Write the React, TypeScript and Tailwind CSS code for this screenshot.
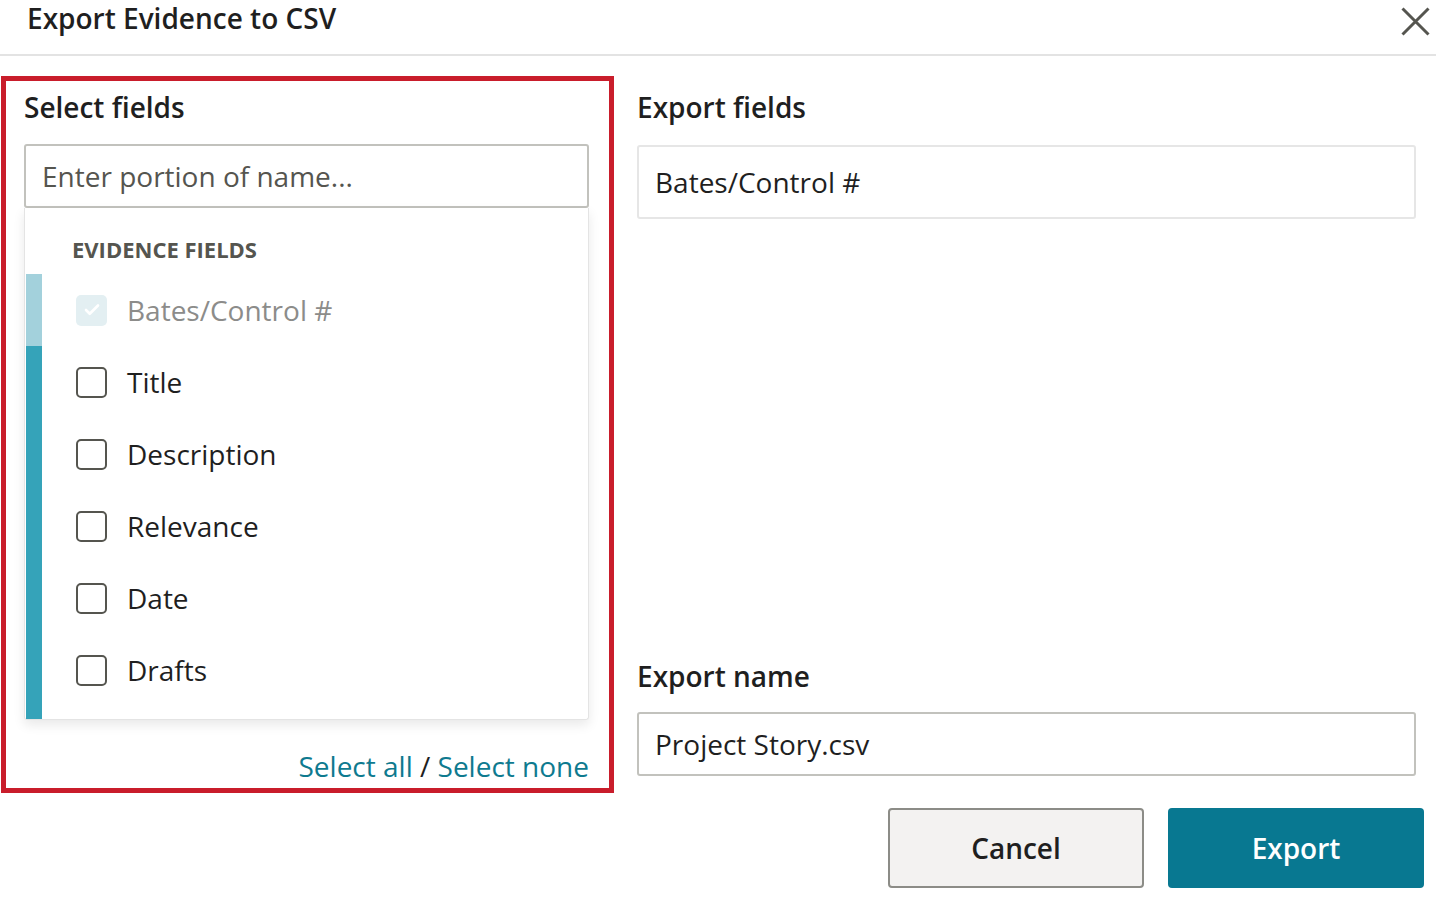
import { Check } from 'lucide-react';

const FIELDS = [
  { label: 'Bates/Control #', locked: true },
  { label: 'Title' },
  { label: 'Description' },
  { label: 'Relevance' },
  { label: 'Date' },
  { label: 'Drafts' },
];

function FieldRow({ label, locked }: { label: string; locked?: boolean }) {
  return (
    <div className="h-[72px] flex items-center pl-[34px]">
      {locked ? (
        <span className="w-[31px] h-[31px] rounded-[5px] bg-[#e3eff2] flex items-center justify-center">
          <Check className="w-[18px] h-[18px] text-white" strokeWidth={3.5} />
        </span>
      ) : (
        <span className="w-[31px] h-[31px] rounded-[5px] border-2 border-[#55554f] bg-white" />
      )}
      <span className={`ml-[20px] text-[28px] leading-[38px] ${locked ? 'text-[#8c8c8a]' : 'text-[#1f1f1f]'}`}>
        {label}
      </span>
    </div>
  );
}

export default function App() {
  return (
    <div className="w-[1436px] h-[904px] bg-white overflow-hidden font-['Open_Sans',sans-serif] text-[#1f1f1f]">
      {/* Header */}
      <header className="h-[56px] border-b-2 border-[#e3e3e3] flex items-start justify-between pl-[27px] pr-[6px]">
        <h1 className="text-[28px] leading-[36px] font-semibold">Export Evidence to CSV</h1>
        <button className="mt-[7px] text-[#55554f]">
          <svg width="29" height="29" viewBox="0 0 29 29" fill="none" stroke="currentColor" strokeWidth="3">
            <path d="M1.5 1.5 L27.5 27.5 M27.5 1.5 L1.5 27.5" />
          </svg>
        </button>
      </header>

      {/* Body */}
      <div className="flex pt-[20px]">
        {/* Select fields (highlighted) */}
        <section className="ml-px w-[613px] h-[717px] border-[5px] border-[#c91d2b] pl-[18px] pr-[20px] pt-[7px] flex flex-col">
          <h2 className="text-[28px] leading-[38px] font-semibold">Select fields</h2>
          <div className="mt-[18px] h-[64px] border-2 border-[#c2c2bd] rounded-[3px] flex items-center pl-[16px] text-[28px] text-[#55554f]">
            Enter portion of name...
          </div>
          <div className="h-[512px] border border-[#e4e4e4] border-t-0 rounded-b-[3px] shadow-[0_5px_12px_rgba(0,0,0,0.09)] flex">
            <div className="w-[16px] ml-px flex flex-col">
              <div className="h-[66px] bg-white" />
              <div className="h-[72px] bg-[#a3d1dc]" />
              <div className="flex-1 bg-[#35a3b9]" />
            </div>
            <div className="flex-1 flex flex-col">
              <div className="h-[66px] pl-[30px] pt-[26px] text-[22px] leading-[30px] font-bold text-[#55554f]">
                EVIDENCE FIELDS
              </div>
              {FIELDS.map((f) => (
                <FieldRow key={f.label} label={f.label} locked={f.locked} />
              ))}
            </div>
          </div>
          <div className="mt-[27px] text-right text-[28px] leading-[38px]">
            <a className="text-[#0e7a8f]">Select all</a>
            <span className="text-[#1f1f1f]"> / </span>
            <a className="text-[#0e7a8f]">Select none</a>
          </div>
        </section>

        {/* Export fields */}
        <section className="ml-[23px] w-[779px] h-[717px] pt-[12px] pb-[17px] flex flex-col">
          <h2 className="text-[28px] leading-[38px] font-semibold">Export fields</h2>
          <div className="mt-[19px] h-[74px] border-2 border-[#e6e6e6] rounded-[3px] flex items-center pl-[16px] text-[28px]">
            Bates/Control #
          </div>
          <div className="flex-1" />
          <h2 className="text-[28px] leading-[38px] font-semibold">Export name</h2>
          <div className="mt-[17px] h-[64px] border-2 border-[#c2c2bd] rounded-[3px] flex items-center pl-[16px] text-[28px]">
            Project Story.csv
          </div>
        </section>
      </div>

      {/* Footer */}
      <footer className="mt-[15px] flex justify-end gap-[24px] pr-[12px]">
        <button className="w-[256px] h-[80px] rounded-[4px] border-2 border-[#8c8c87] bg-[#f3f2f1] text-[28px] font-semibold text-[#1f1f1f]">
          Cancel
        </button>
        <button className="w-[256px] h-[80px] rounded-[4px] bg-[#087891] text-[28px] font-semibold text-white">
          Export
        </button>
      </footer>
    </div>
  );
}
